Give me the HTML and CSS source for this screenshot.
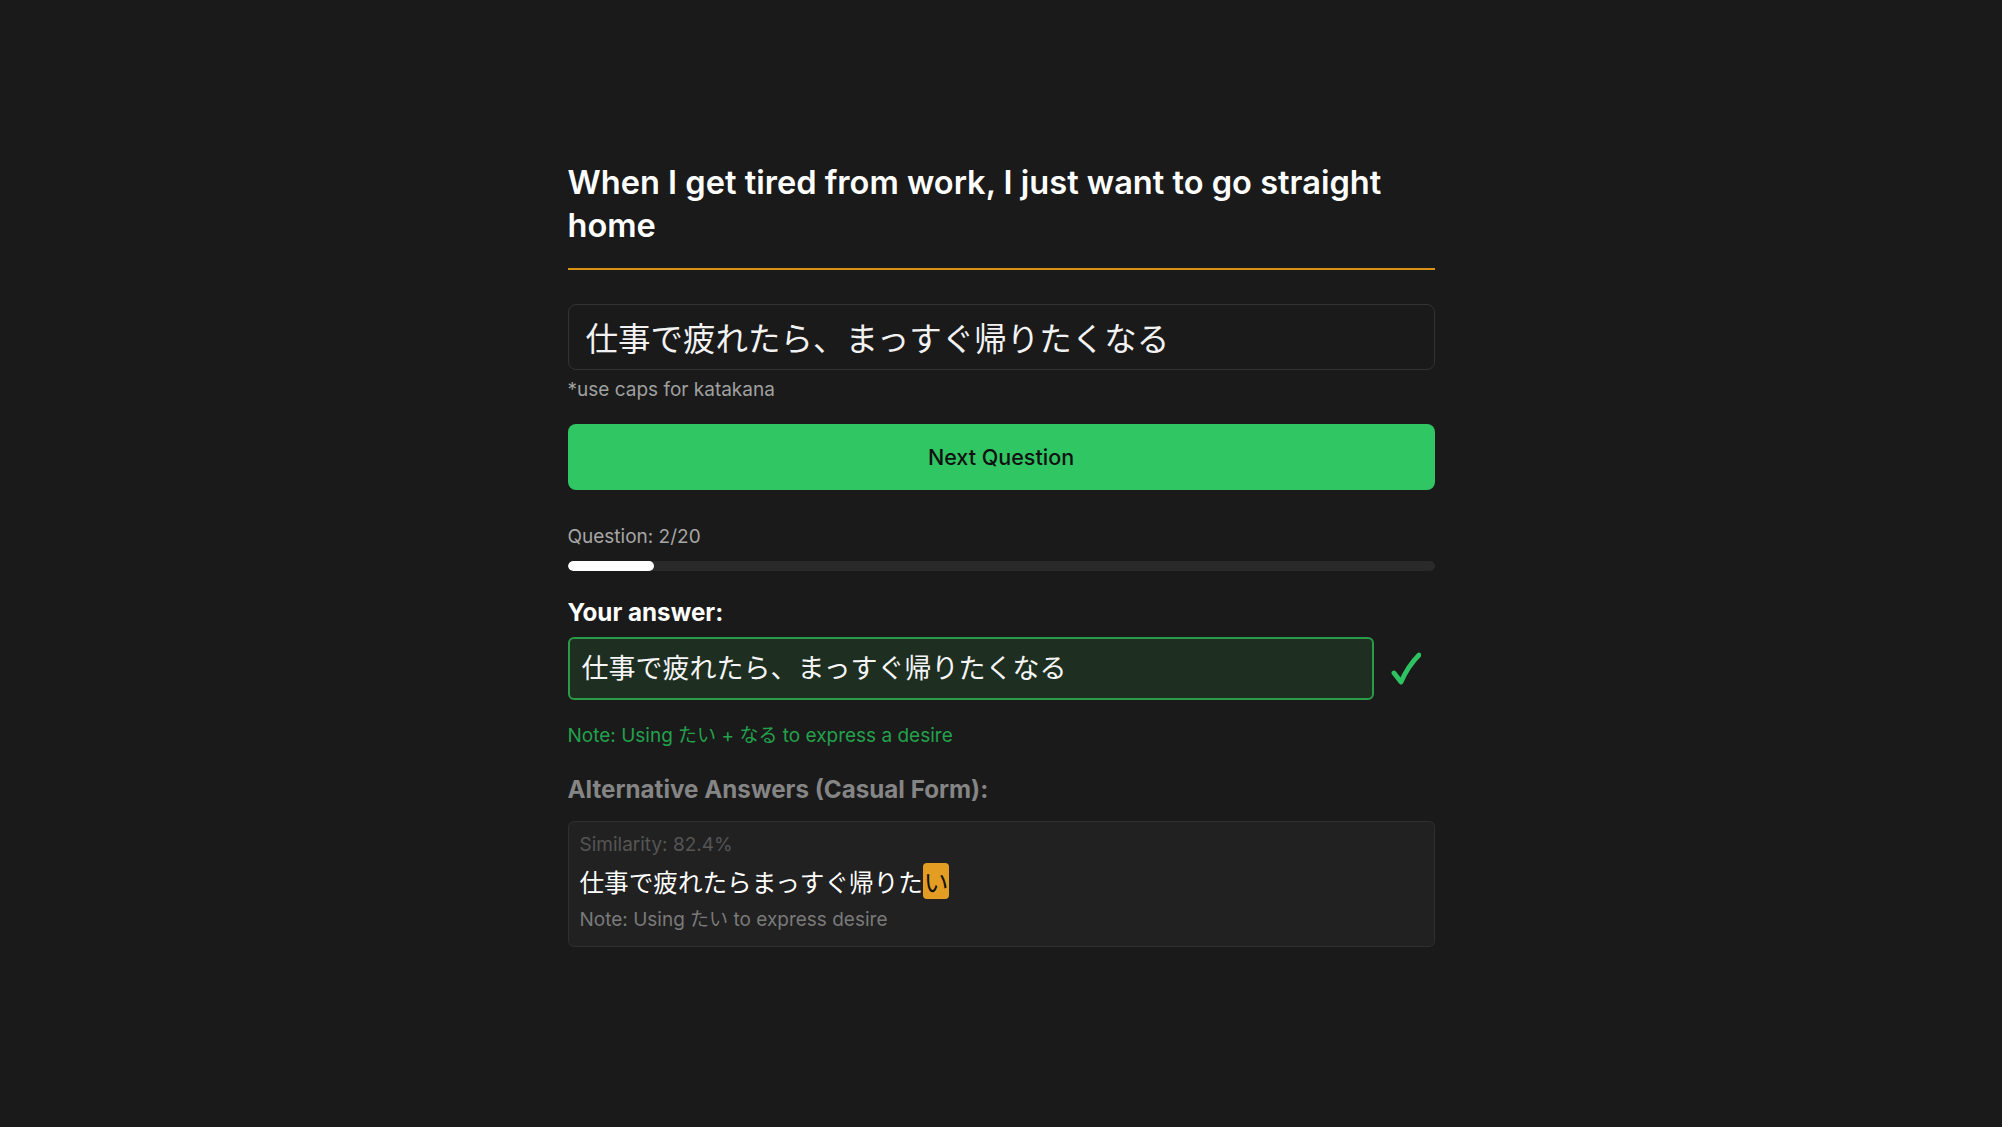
FILE: index.html
```html
<!DOCTYPE html>
<html lang="en">
<head>
<meta charset="utf-8">
<title>Quiz</title>
<link rel="stylesheet" href="styles.css">
</head>
<body>
<main class="quiz">
  <h1 class="prompt">When I get tired from work, I just want to go straight home</h1>
  <div class="input-box">仕事で疲れたら、まっすぐ帰りたくなる</div>
  <p class="hint">*use caps for katakana</p>
  <button class="next-btn">Next Question</button>
  <p class="progress-label">Question: 2/20</p>
  <div class="progress"><div class="progress-fill" style="width:10%"></div></div>
  <h2 class="answer-label">Your answer:</h2>
  <div class="answer-row">
    <div class="answer-box">仕事で疲れたら、まっすぐ帰りたくなる</div>
    <svg class="check" width="30" height="34" viewBox="0 0 30 34" aria-hidden="true">
      <path d="M3 21 L10 30 Q17 14 28 3" fill="none" stroke="#2fc262" stroke-width="4.8" stroke-linecap="round" stroke-linejoin="round"/>
    </svg>
  </div>
  <p class="answer-note">Note: Using たい + なる to express a desire</p>
  <h2 class="alt-heading">Alternative Answers (Casual Form):</h2>
  <div class="alt-card">
    <p class="alt-sim">Similarity: 82.4%</p>
    <p class="alt-text">仕事で疲れたらまっすぐ帰りた<span class="diff">い</span></p>
    <p class="alt-note">Note: Using たい to express desire</p>
  </div>
</main>
</body>
</html>
```
FILE: styles.css
```css
* { box-sizing: border-box; }
html, body { margin: 0; padding: 0; }
body {
  background: #1a1a1a;
  color: #ffffff;
  font-family: Inter, "Noto Sans CJK JP", sans-serif;
  min-height: 100vh;
}
.quiz {
  width: 867px;
  margin: 0 auto;
  padding-top: 161px;
  display: flex;
  flex-direction: column;
}
p, h1, h2 { margin: 0; }
.prompt {
  font-size: 32.6px;
  font-weight: 600;
  line-height: 43px;
  padding-bottom: 21px;
  border-bottom: 2px solid #d99116;
}
.input-box {
  margin-top: 34px;
  height: 66px;
  border: 1px solid #333333;
  border-radius: 8px;
  padding: 0 17px;
  font-size: 32.5px;
  line-height: 64px;
  font-family: "Noto Sans CJK JP", sans-serif;
  color: #f2f2f2;
}
.hint {
  margin-top: 6px;
  font-size: 19px;
  line-height: 27px;
  color: #a0a0a0;
}
.next-btn {
  margin-top: 21px;
  height: 66px;
  border: none;
  border-radius: 8px;
  background: #2fc663;
  color: #111111;
  font-family: Inter, sans-serif;
  font-size: 21.5px;
  font-weight: 500;
}
.progress-label {
  margin-top: 33px;
  font-size: 19px;
  line-height: 27px;
  color: #a6a6a6;
}
.progress {
  margin-top: 11px;
  height: 10px;
  background: #2a2a2a;
  border-radius: 5px;
  overflow: hidden;
}
.progress-fill {
  height: 100%;
  background: #ffffff;
  border-radius: 5px;
}
.answer-label {
  margin-top: 27px;
  font-size: 24.2px;
  font-weight: 700;
  line-height: 30px;
}
.answer-row {
  margin-top: 9px;
  display: flex;
  align-items: center;
  gap: 17px;
}
.answer-box {
  flex: 1;
  height: 63px;
  border: 2px solid #2b9b48;
  border-radius: 6px;
  background: #1e2f22;
  padding: 0 12px;
  font-family: "Noto Sans CJK JP", sans-serif;
  font-size: 27px;
  line-height: 56px;
  color: #f5f5f5;
}
.check {
  flex: none;
  margin-right: 14px;
}
.answer-note {
  margin-top: 22px;
  font-size: 19px;
  line-height: 27px;
  color: #23a14c;
}
.alt-heading {
  margin-top: 26px;
  font-size: 24.2px;
  font-weight: 700;
  line-height: 30px;
  color: #858585;
}
.alt-card {
  margin-top: 16px;
  border: 1px solid #2f2f2f;
  border-radius: 6px;
  background: #212121;
  padding: 11px 11px 13px;
  display: flex;
  flex-direction: column;
}
.alt-sim {
  font-size: 19px;
  line-height: 24px;
  color: #555555;
}
.alt-text {
  margin-top: 7px;
  font-family: "Noto Sans CJK JP", sans-serif;
  font-size: 24.6px;
  line-height: 34px;
  color: #ffffff;
}
.diff {
  background: #e39d22;
  color: #111111;
  border-radius: 4px;
  padding: 0 1px;
}
.alt-note {
  margin-top: 9px;
  font-size: 19px;
  line-height: 26px;
  color: #7a7a7a;
}
```
